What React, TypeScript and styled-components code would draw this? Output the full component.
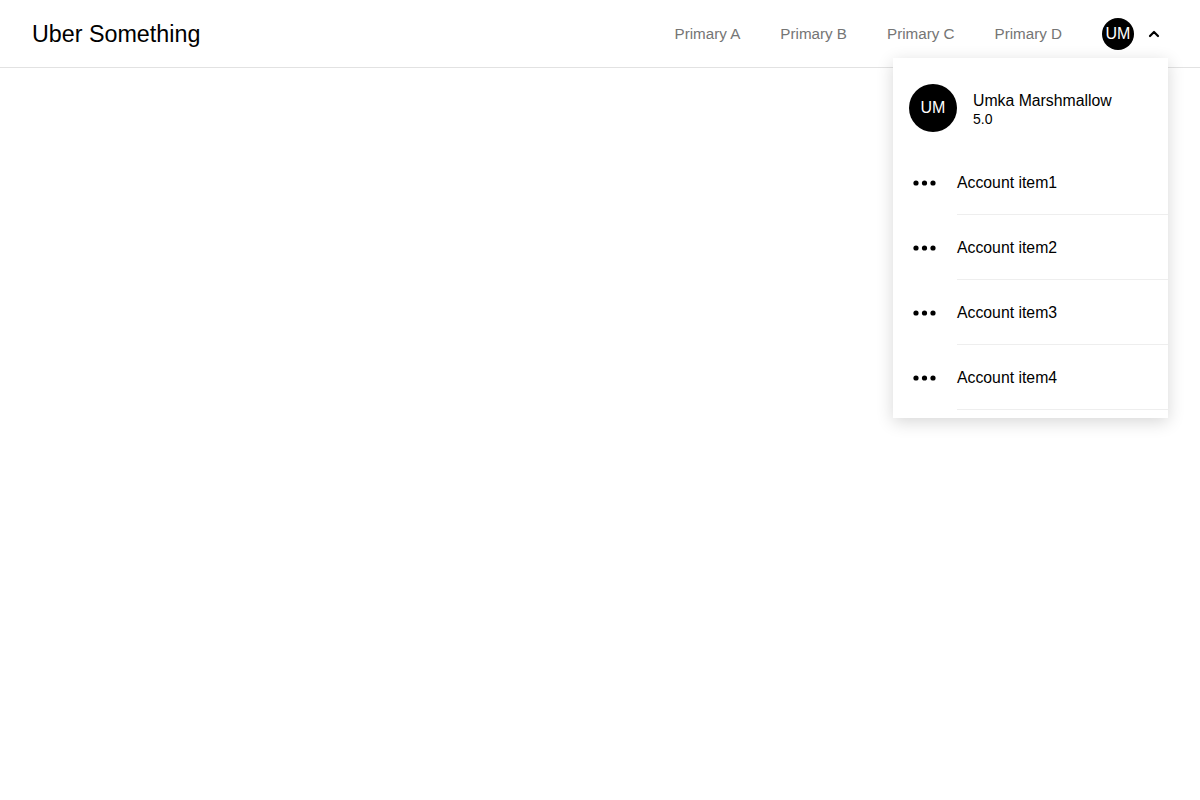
import styled, { createGlobalStyle } from "styled-components";

const GlobalStyle = createGlobalStyle`
    body {
        margin: 0;
        background: #ffffff;
        font-family: "Liberation Sans", Arial, sans-serif;
        color: #000000;
    }
`

const Page = styled.div`
    width: 1200px;
    height: 800px;
    position: relative;
`
const Bar = styled.header`
    height: 68px;
    box-sizing: border-box;
    border-bottom: 1px solid #e2e2e2;
    display: flex;
    align-items: center;
    padding: 0 32px;
`
const Title = styled.div`
    font-size: 23.3px;
    line-height: 32px;
    margin-top: 1px;
`
const Spacer = styled.div`
    flex: 1;
`
const Nav = styled.nav`
    display: flex;
    align-items: center;
    gap: 40px;
`
const NavItem = styled.span`
    font-size: 15.2px;
    line-height: 20px;
    color: #757575;
`
const UserArea = styled.div`
    display: flex;
    align-items: center;
    margin-left: 40px;
    gap: 10px;
    position: relative;
`
const Avatar = styled.div<{ $size: number; $font: number }>`
    width: ${p => p.$size}px;
    height: ${p => p.$size}px;
    border-radius: 50%;
    background: #000000;
    color: #ffffff;
    display: flex;
    align-items: center;
    justify-content: center;
    font-size: ${p => p.$font}px;
    flex-shrink: 0;
`
const Chevron = styled.svg`
    width: 20px;
    height: 20px;
    margin-right: 4px;
`
const Menu = styled.div`
    position: absolute;
    top: 58px;
    right: 32px;
    width: 275px;
    background: #ffffff;
    box-shadow: 0 4px 16px rgba(0, 0, 0, 0.16);
    padding: 8px 0;
    box-sizing: border-box;
`
const Profile = styled.div`
    display: flex;
    align-items: center;
    gap: 16px;
    padding: 18px 16px;
`
const ProfileText = styled.div`
    display: flex;
    flex-direction: column;
    margin-top: 3px;
`
const Name = styled.div`
    font-size: 15.8px;
    line-height: 20px;
    margin-top: -2px;
`
const Rating = styled.div`
    font-size: 14px;
    line-height: 16px;
`
const Item = styled.div`
    display: flex;
    align-items: center;
    height: 65px;
    padding-left: 16px;
`
const Dots = styled.svg`
    width: 28px;
    height: 8px;
    margin-right: 20px;
    flex-shrink: 0;
`
const ItemLabel = styled.div`
    flex: 1;
    height: 100%;
    display: flex;
    align-items: center;
    font-size: 15.8px;
    border-bottom: 1px solid #eeeeee;
    box-sizing: border-box;
    padding-top: 2px;
`

const items = ["Account item1", "Account item2", "Account item3", "Account item4"];

const App = () => {
    return (
        <Page>
            <GlobalStyle />
            <Bar>
                <Title>Uber Something</Title>
                <Spacer />
                <Nav>
                    <NavItem>Primary A</NavItem>
                    <NavItem>Primary B</NavItem>
                    <NavItem>Primary C</NavItem>
                    <NavItem>Primary D</NavItem>
                </Nav>
                <UserArea>
                    <Avatar $size={32} $font={16}>UM</Avatar>
                    <Chevron viewBox="0 0 20 20">
                        <path d="M6 12 L10 8 L14 12" fill="none" stroke="#000" strokeWidth="2.2" strokeLinecap="round" strokeLinejoin="round" />
                    </Chevron>
                </UserArea>
            </Bar>
            <Menu>
                <Profile>
                    <Avatar $size={48} $font={16}>UM</Avatar>
                    <ProfileText>
                        <Name>Umka Marshmallow</Name>
                        <Rating>5.0</Rating>
                    </ProfileText>
                </Profile>
                {items.map(label => (
                    <Item key={label}>
                        <Dots viewBox="0 0 28 8">
                            <circle cx="7" cy="4" r="2.6" fill="#000" />
                            <circle cx="15.5" cy="4" r="2.6" fill="#000" />
                            <circle cx="24" cy="4" r="2.6" fill="#000" />
                        </Dots>
                        <ItemLabel>{label}</ItemLabel>
                    </Item>
                ))}
            </Menu>
        </Page>
    )
}

export default App;
